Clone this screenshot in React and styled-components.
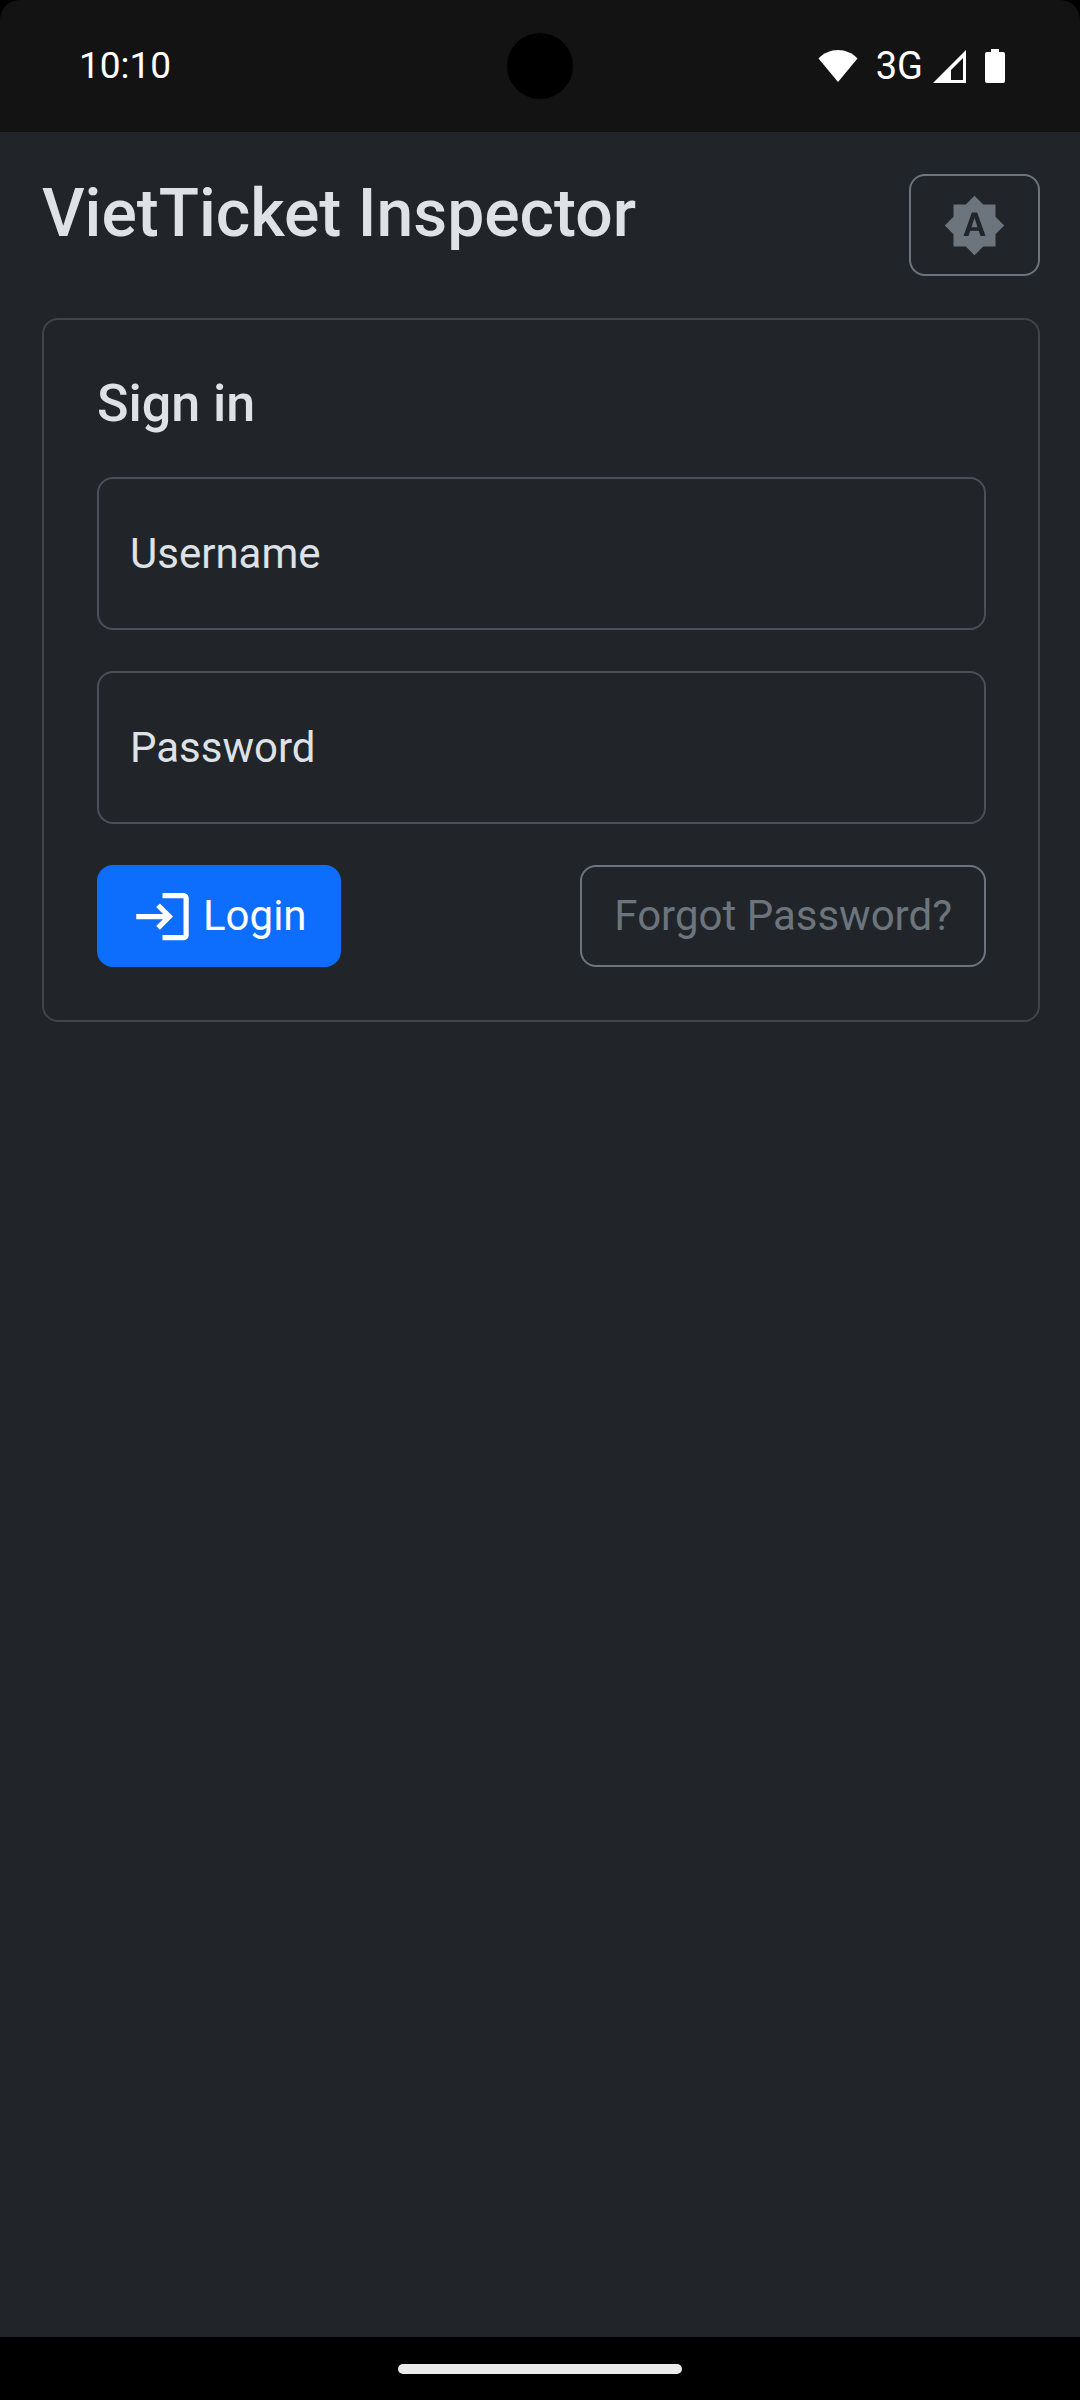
import React from "react";
import styled, { createGlobalStyle } from "styled-components";
import { MdBrightnessAuto, MdLogin } from "react-icons/md";

const GlobalStyle = createGlobalStyle`
  *, *::before, *::after { box-sizing: border-box; }
  body {
    margin: 0;
    background: #000;
    color: #dee2e6;
    font-family: Roboto, "Noto Sans", sans-serif;
    font-size: 42px;
    line-height: 62px;
  }
`;

const Screen = styled.div`
  display: flex;
  flex-direction: column;
  min-height: 100vh;
`;

const StatusBar = styled.header`
  position: relative;
  display: flex;
  align-items: center;
  justify-content: space-between;
  height: 132px;
  padding: 0 75px 0 79px;
  border-radius: 20px 20px 0 0;
  background: #131313;
  color: #fff;
  font-size: 37px;
  line-height: 44px;
`;

/* Camera cutout, centred over the status bar */
const Camera = styled.div`
  position: absolute;
  inset: 0;
  margin: auto;
  width: 66px;
  height: 66px;
  border-radius: 50%;
  background: #000;
`;

const StatusIcons = styled.div`
  display: flex;
  align-items: center;
`;

const Network = styled.span`
  margin: 0 10px 0 18px;
  font-size: 38px;
`;

const BatteryIcon = styled.svg`
  margin-left: 19px;
`;

const Content = styled.main`
  flex: 1;
  padding: 42px 40px 42px 42px;
  background: #212529;
`;

const TitleRow = styled.div`
  display: flex;
  align-items: flex-start;
  justify-content: space-between;
  margin-bottom: 42px;
`;

const Title = styled.h1`
  margin: 0;
  font-size: 66px;
  line-height: 80px;
  font-weight: 500;
`;

const Button = styled.button`
  display: inline-flex;
  align-items: center;
  gap: 9px;
  height: 102px;
  padding: 0 32px;
  border: 2px solid ${(p) => (p.$primary ? "#0d6efd" : "#6c757d")};
  border-radius: 16px;
  background: ${(p) => (p.$primary ? "#0d6efd" : "transparent")};
  color: ${(p) => (p.$primary ? "#fff" : "#6c757d")};
  font: inherit;
  cursor: pointer;

  svg { flex: none; }
`;

const Card = styled.form`
  padding: 52px 52px 53px 53px;
  border: 2px solid #414549;
  border-radius: 16px;
`;

const CardTitle = styled.h2`
  margin: 0 0 42px;
  font-size: 52px;
  line-height: 63px;
  font-weight: 500;
`;

const Field = styled.div`
  display: grid;
  align-items: center;
  margin-bottom: 41px;
`;

const Input = styled.input`
  grid-area: 1 / 1;
  width: 100%;
  height: 153px;
  padding: 48px 31px 0;
  border: 2px solid #495057;
  border-radius: 16px;
  background: transparent;
  color: inherit;
  font: inherit;
`;

const Label = styled.label`
  grid-area: 1 / 1;
  padding: 0 33px;
  pointer-events: none;

  ${Input}:focus + &,
  ${Input}:not(:placeholder-shown) + & {
    align-self: start;
    font-size: 32px;
  }
`;

const Actions = styled.div`
  display: flex;
  justify-content: space-between;
`;

const NavBar = styled.footer`
  display: flex;
  align-items: center;
  justify-content: center;
  height: 63px;
  background: #000;
`;

const NavHandle = styled.div`
  width: 284px;
  height: 10px;
  border-radius: 5px;
  background: #ebebeb;
`;

function TextField({ id, label, type }) {
  return (
    <Field>
      <Input id={id} type={type} placeholder=" " />
      <Label htmlFor={id}>{label}</Label>
    </Field>
  );
}

export default function App() {
  return (
    <Screen>
      <GlobalStyle />
      <StatusBar>
        <time>10:10</time>
        <Camera />
        <StatusIcons>
          <svg width="40" height="34" viewBox="0 0 40 34" fill="#fff" aria-hidden="true">
            <path d="M0.5 9.5C11-2 29-2 39.500 9.500L20 33Z" />
          </svg>
          <Network>3G</Network>
          <svg width="33" height="33" viewBox="0 0 33 33" fill="#fff" aria-hidden="true">
            <path fillRule="evenodd" d="M33 0V33H0ZM30 8L18 20V30H30Z" />
          </svg>
          <BatteryIcon width="20" height="34" viewBox="0 0 20 34" fill="#fff" aria-hidden="true">
            <path d="M6 0H14V3H18Q20 3 20 5V32Q20 34 18 34H2Q0 34 0 32V5Q0 3 2 3H6Z" />
          </BatteryIcon>
        </StatusIcons>
      </StatusBar>
      <Content>
        <TitleRow>
          <Title>VietTicket Inspector</Title>
          <Button type="button" aria-label="Theme: auto">
            <MdBrightnessAuto size={63} />
          </Button>
        </TitleRow>
        <Card onSubmit={(e) => e.preventDefault()}>
          <CardTitle>Sign in</CardTitle>
          <TextField id="username" label="Username" type="text" />
          <TextField id="password" label="Password" type="password" />
          <Actions>
            <Button type="submit" $primary>
              <MdLogin size={63} />
              Login
            </Button>
            <Button type="button">Forgot Password?</Button>
          </Actions>
        </Card>
      </Content>
      <NavBar>
        <NavHandle />
      </NavBar>
    </Screen>
  );
}
